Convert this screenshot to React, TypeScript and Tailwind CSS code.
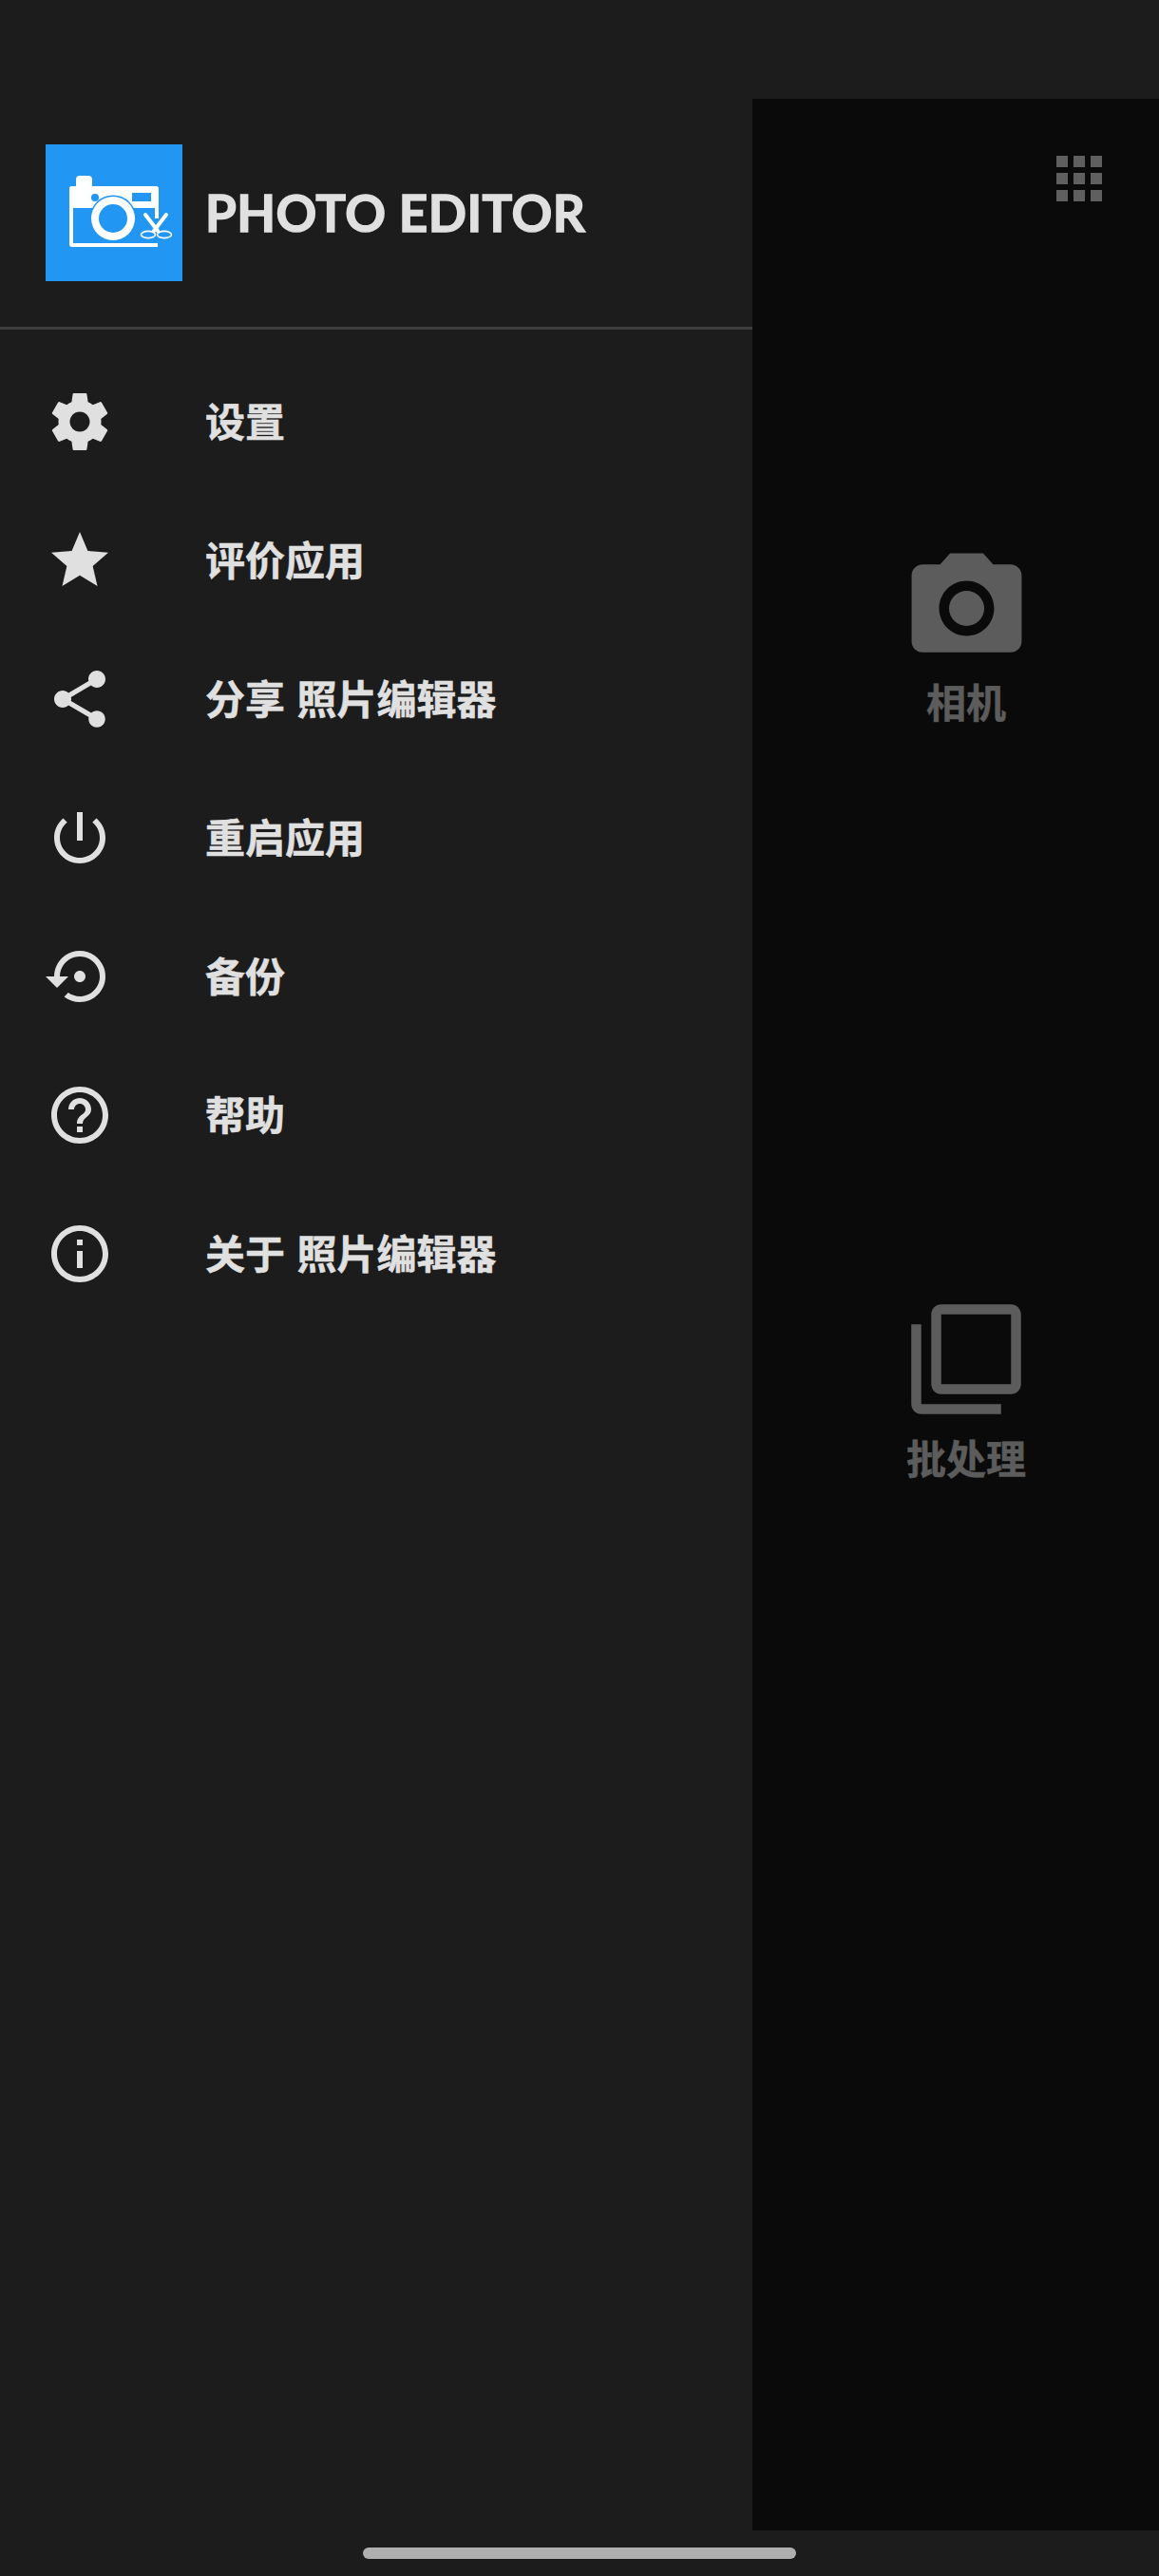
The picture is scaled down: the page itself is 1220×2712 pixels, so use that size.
import React from "react"

const icons = {
  settings:
    "M19.43 12.98c.04-.32.07-.64.07-.98s-.03-.66-.07-.98l2.11-1.65c.19-.15.24-.42.12-.64l-2-3.46c-.12-.22-.39-.3-.61-.22l-2.49 1c-.52-.4-1.08-.73-1.69-.98l-.38-2.65C14.46 2.18 14.25 2 14 2h-4c-.25 0-.46.18-.49.42l-.38 2.65c-.61.25-1.17.59-1.69.98l-2.49-1c-.23-.09-.49 0-.61.22l-2 3.46c-.13.22-.07.49.12.64l2.11 1.65c-.04.32-.07.65-.07.98s.03.66.07.98l-2.11 1.65c-.19.15-.24.42-.12.64l2 3.46c.12.22.39.3.61.22l2.49-1c.52.4 1.08.73 1.69.98l.38 2.65c.03.24.24.42.49.42h4c.25 0 .46-.18.49-.42l.38-2.65c.61-.25 1.17-.59 1.69-.98l2.49 1c.23.09.49 0 .61-.22l2-3.46c.12-.22.07-.49-.12-.64l-2.11-1.65zM12 15.5c-1.93 0-3.5-1.57-3.5-3.5s1.57-3.5 3.5-3.5 3.5 1.57 3.5 3.5-1.57 3.5-3.5 3.5z",
  star: "M12 17.27L18.18 21l-1.64-7.03L22 9.24l-7.19-.61L12 2 9.19 8.63 2 9.24l5.46 4.73L5.82 21z",
  share:
    "M18 16.08c-.76 0-1.44.3-1.96.77L8.91 12.7c.05-.23.09-.46.09-.7s-.04-.47-.09-.7l7.05-4.11c.54.5 1.25.81 2.04.81 1.66 0 3-1.34 3-3s-1.34-3-3-3-3 1.34-3 3c0 .24.04.47.09.7L8.04 9.81C7.5 9.31 6.79 9 6 9c-1.66 0-3 1.34-3 3s1.34 3 3 3c.79 0 1.5-.31 2.04-.81l7.12 4.16c-.05.21-.08.43-.08.65 0 1.61 1.31 2.92 2.92 2.92 1.61 0 2.92-1.31 2.92-2.92s-1.31-2.92-2.92-2.92z",
  power:
    "M13 3h-2v10h2V3zm4.83 2.17l-1.42 1.42C17.99 7.86 19 9.81 19 12c0 3.87-3.13 7-7 7s-7-3.13-7-7c0-2.19 1.01-4.14 2.58-5.42L6.17 5.17C4.23 6.82 3 9.26 3 12c0 4.97 4.03 9 9 9s9-4.03 9-9c0-2.74-1.23-5.18-3.17-6.83z",
  backup:
    "M14 12c0-1.1-.9-2-2-2s-2 .9-2 2 .9 2 2 2 2-.9 2-2zm-2-9c-4.97 0-9 4.03-9 9H0l4 4 4-4H5c0-3.87 3.13-7 7-7s7 3.13 7 7-3.13 7-7 7c-1.51 0-2.91-.49-4.06-1.3l-1.42 1.44C8.04 20.3 9.94 21 12 21c4.97 0 9-4.03 9-9s-4.03-9-9-9z",
  help:
    "M11 18h2v-2h-2v2zm1-16C6.48 2 2 6.48 2 12s4.48 10 10 10 10-4.48 10-10S17.52 2 12 2zm0 18c-4.41 0-8-3.59-8-8s3.59-8 8-8 8 3.59 8 8-3.59 8-8 8zm0-14c-2.21 0-4 1.79-4 4h2c0-1.1.9-2 2-2s2 .9 2 2c0 2-3 1.75-3 5h2c0-2.25 3-2.5 3-5 0-2.21-1.79-4-4-4z",
  info:
    "M11 7h2v2h-2zm0 4h2v6h-2zm1-9C6.48 2 2 6.48 2 12s4.48 10 10 10 10-4.48 10-10S17.52 2 12 2zm0 18c-4.41 0-8-3.59-8-8s3.59-8 8-8 8 3.59 8 8-3.59 8-8 8z",
}

const menu = [
  { icon: icons.settings, label: "设置" },
  { icon: icons.star, label: "评价应用" },
  { icon: icons.share, label: "分享 照片编辑器" },
  { icon: icons.power, label: "重启应用" },
  { icon: icons.backup, label: "备份" },
  { icon: icons.help, label: "帮助" },
  { icon: icons.info, label: "关于 照片编辑器" },
]

const Logo = () => (
  <div className="w-[144px] h-[144px] bg-[#2196f3] shrink-0">
    <svg width="144" height="144" viewBox="0 0 144 144">
      <rect x="32" y="33" width="17" height="14" rx="4" fill="#fff" />
      <path d="M28 44h87a4 4 0 0 1 4 4v30h-4V67H29v37h89v4H28a3 3 0 0 1-3-3V47a3 3 0 0 1 3-3z" fill="#fff" />
      <rect x="25" y="44" width="94" height="23" rx="3" fill="#fff" />
      <circle cx="52" cy="56" r="4" fill="#2196f3" />
      <rect x="91" y="51" width="20" height="9" fill="#2196f3" />
      <circle cx="71" cy="78" r="24.5" fill="#2196f3" />
      <circle cx="71" cy="78" r="23" fill="#fff" />
      <circle cx="71" cy="78" r="15" fill="#2196f3" />
      <path d="M105 74l14 18M127 74l-14 18" stroke="#2196f3" strokeWidth="7" />
      <path d="M105 74l13 17M127 74l-13 17" stroke="#fff" strokeWidth="4" strokeLinecap="round" />
      <ellipse cx="108" cy="95" rx="7.5" ry="3.6" fill="none" stroke="#fff" strokeWidth="1.6" />
      <ellipse cx="125" cy="95" rx="7.5" ry="3.6" fill="none" stroke="#fff" strokeWidth="1.6" />
    </svg>
  </div>
)

const App = () => {
  return (
    <div className="relative flex w-[1220px] h-[2712px] bg-[#1c1c1c] overflow-hidden [font-family:'Noto_Sans_CJK_SC','Noto_Sans',sans-serif]">
      <div className="w-[792px] shrink-0">
        <div className="flex items-center gap-6 pl-12 pt-[152px] pb-12">
          <Logo />
          <span className="text-[53px] leading-none font-bold pb-[2px] tracking-[0.4px] text-[#e0e0e0] [-webkit-text-stroke:1.4px_#e0e0e0] [font-family:'Lato',sans-serif]">
            PHOTO EDITOR
          </span>
        </div>
        <div className="h-[3px] bg-[#3d3d3d]" />
        <div className="pt-6">
          {menu.map((item) => (
            <div key={item.label} className="flex items-center h-[146px] pl-12 gap-24">
              <svg width="72" height="72" viewBox="0 0 24 24" fill="#e0e0e0">
                <path d={item.icon} />
              </svg>
              <span className="text-[42px] leading-none font-bold pb-1 text-[#e0e0e0] [word-spacing:3px] [-webkit-text-stroke:0.5px_#e0e0e0]">
                {item.label}
              </span>
            </div>
          ))}
        </div>
      </div>

      <div className="flex-1 mt-[104px] mb-[48px] bg-[#0a0a0a] flex flex-col">
        <div className="grid grid-cols-3 gap-[6px] self-end mt-[60px] mr-[60px]">
          {Array.from({ length: 9 }).map((_, i) => (
            <div key={i} className="w-3 h-3 bg-[#5f5f5f]" />
          ))}
        </div>
        <div className="flex flex-col items-center pl-[22px] mt-[359px]">
          <svg width="139" height="139" viewBox="0 0 24 24" fill="#5c5c5c">
            <circle cx="12" cy="12" r="3.2" />
            <path d="M9 2L7.17 4H4c-1.1 0-2 .9-2 2v12c0 1.1.9 2 2 2h16c1.1 0 2-.9 2-2V6c0-1.1-.9-2-2-2h-3.17L15 2H9zm3 15c-2.76 0-5-2.24-5-5s2.24-5 5-5 5 2.24 5 5-2.24 5-5 5z" />
          </svg>
          <span className="text-[42px] leading-none font-bold mt-[7px] text-[#5c5c5c] [-webkit-text-stroke:0.5px_#5c5c5c]">相机</span>
        </div>
        <div className="flex flex-col items-center pl-[22px] mt-[609px]">
          <svg width="126" height="126" viewBox="0 0 24 24" fill="#5c5c5c">
            <path d="M3 5H1v16c0 1.1.9 2 2 2h16v-2H3V5zm18-4H7c-1.1 0-2 .9-2 2v14c0 1.1.9 2 2 2h14c1.1 0 2-.9 2-2V3c0-1.1-.9-2-2-2zm0 16H7V3h14v14z" />
          </svg>
          <span className="text-[42px] leading-none font-bold mt-[19px] text-[#5c5c5c] [-webkit-text-stroke:0.5px_#5c5c5c]">批处理</span>
        </div>
      </div>

      {/* gesture bar */}
      <div className="absolute left-[382px] top-[2682px] w-[456px] h-3 rounded-md bg-[#afafaf]" />
    </div>
  )
}

export default App
